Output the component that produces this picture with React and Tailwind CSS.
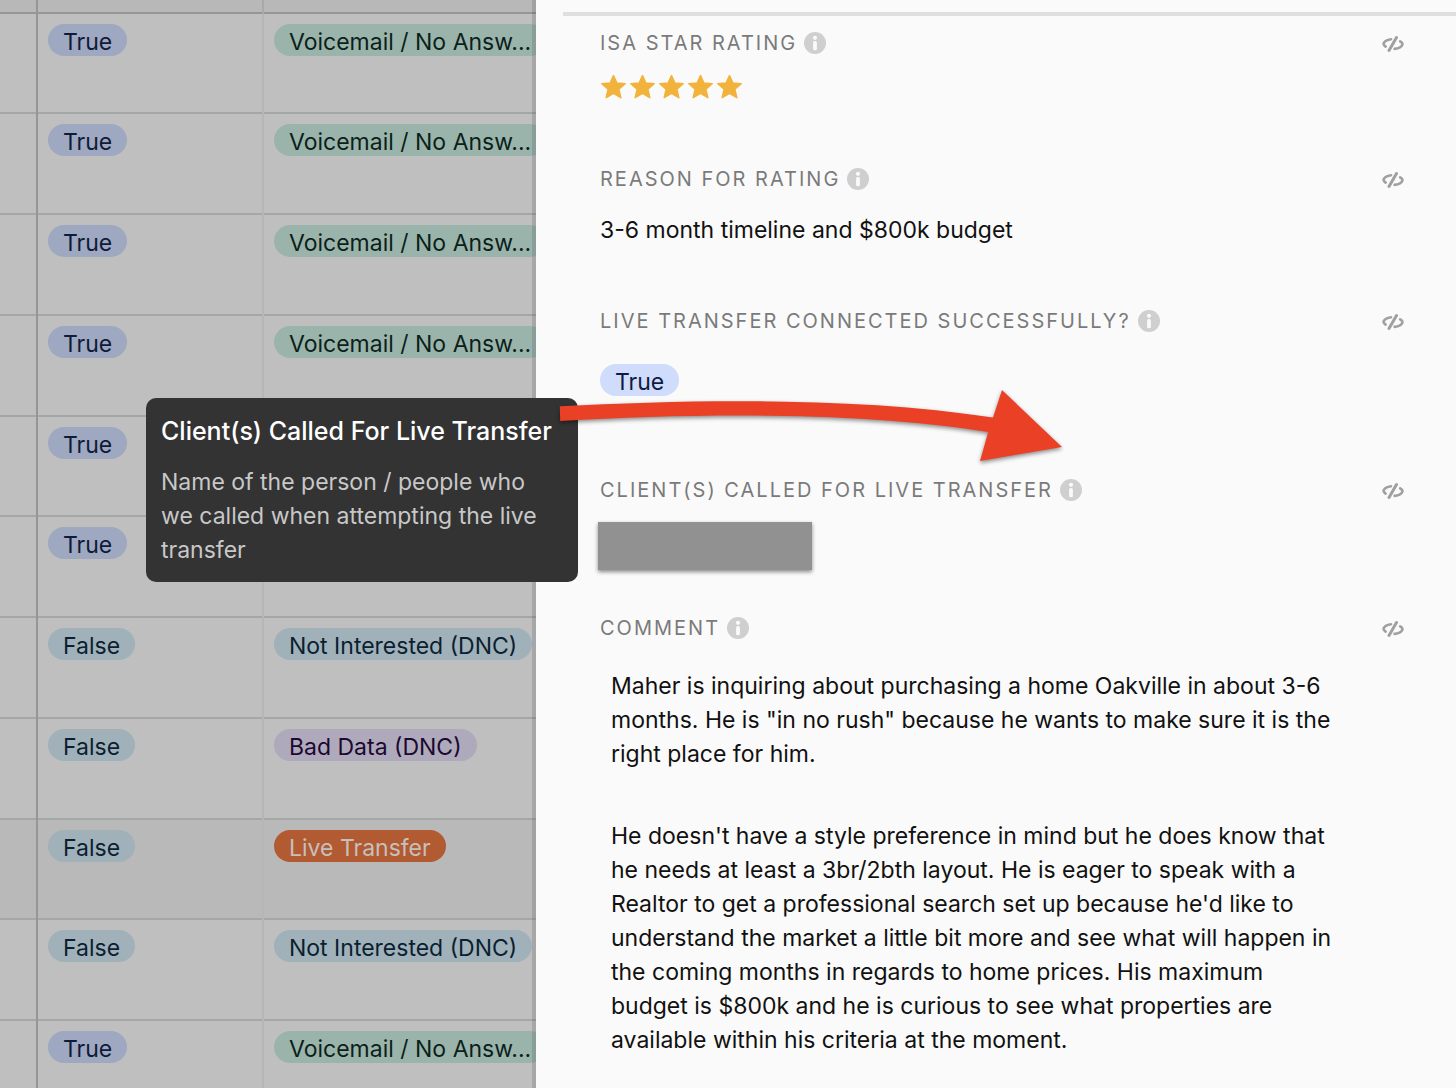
import { clsx } from "clsx";

const rows = [
  { connected: "True", result: "voicemail" },
  { connected: "True", result: "voicemail" },
  { connected: "True", result: "voicemail" },
  { connected: "True", result: "voicemail" },
  { connected: "True", result: "voicemail" },
  { connected: "True", result: "voicemail" },
  { connected: "False", result: "notInterested" },
  { connected: "False", result: "badData" },
  { connected: "False", result: "liveTransfer", active: true },
  { connected: "False", result: "notInterested" },
  { connected: "True", result: "voicemail" },
];

const results = {
  voicemail: { label: "Voicemail / No Answ...", className: "bg-[#9bb4ab] text-[#0b1f1b]" },
  notInterested: { label: "Not Interested (DNC)", className: "bg-[#a0b1ba] text-[#0b1f30]" },
  badData: { label: "Bad Data (DNC)", className: "bg-[#afaabb] text-[#1c0830]" },
  liveTransfer: { label: "Live Transfer", className: "bg-[#b25a31] text-[#c6c0bd]" },
};

const Pill = ({ className, children }) => (
  <span
    className={clsx(
      "inline-flex h-8 items-center rounded-full px-[15px] pt-1 text-[23px] leading-8 whitespace-nowrap",
      className
    )}
  >
    {children}
  </span>
);

const InfoIcon = () => (
  <svg viewBox="0 0 22 22" className="h-[22px] w-[22px] shrink-0" aria-hidden="true">
    <circle cx="11" cy="11" r="11" fill="#cfcfcf" />
    <circle cx="11" cy="5.8" r="2.1" fill="#fafafa" />
    <rect x="9.1" y="9" width="3.8" height="9.2" rx="1.5" fill="#fafafa" />
  </svg>
);

const CodeIcon = () => (
  <svg viewBox="0 0 22 16" className="mt-px h-4 w-[22px]" fill="none" stroke="#a0a0a0" strokeWidth="3" strokeLinecap="round">
    <path d="M14.5 1.6L7 14.4" />
    <path d="M9 3.2C5 3.8 2.4 5.2 1.6 7.4C1.3 8.5 2.2 9.6 3.6 10.6" strokeWidth="2.6" />
    <path d="M12.6 12.9C16.6 12.4 19.6 10.8 20.4 8.6C20.8 7.5 19.8 6.3 18.2 5.3" strokeWidth="2.6" />
  </svg>
);

const Star = () => (
  <svg viewBox="0 0 26 26" className="h-[26px] w-[26px]" aria-hidden="true">
    <path
      d="M13.5 1.6L16.9 9L25.2 9.7L18.9 15.1L20.8 23.7L13.5 19.4L6.2 23.7L8.1 15.1L1.8 9.7L10.1 9Z"
      fill="#f2b33d"
      stroke="#f2b33d"
      strokeWidth="1.5"
      strokeLinejoin="round"
    />
  </svg>
);

const Field = ({ label, className, children }) => (
  <section className={className}>
    <div className="flex h-[30px] items-center justify-between">
      <div className="flex items-center gap-[7px]">
        <h3 className="text-[20px] leading-[30px] tracking-[2px] text-[#7a7a7a] uppercase">{label}</h3>
        <button type="button" aria-label={`About ${label}`}>
          <InfoIcon />
        </button>
      </div>
      <button type="button" aria-label={`Hide ${label}`}>
        <CodeIcon />
      </button>
    </div>
    {children}
  </section>
);

const RecordsTable = () => (
  <table className="w-full table-fixed border-collapse">
    <colgroup>
      <col className="w-[37px]" />
      <col className="w-[226px]" />
      <col />
    </colgroup>
    <thead>
      <tr className="h-[13px] border-b-2 border-[#969696] bg-[#b8b8b8]">
        <th className="border-r-2 border-[#969696] p-0" />
        <th className="border-r-2 border-[#a6aaaa] p-0" />
        <th className="p-0" />
      </tr>
    </thead>
    <tbody>
      {rows.map((row, i) => (
        <tr
          key={i}
          className={clsx(
            "h-[101px] border-b-2 border-[#a3a8a6] nth-[4n+1]:h-[100px]",
            row.active && "bg-[#b9b9b9]"
          )}
        >
          <td className="border-r-2 border-r-[#969696] p-0" />
          <td className="border-r-2 border-r-[#b5b6b6] p-0 pt-[10px] pl-[10px] align-top">
            <Pill
              className={
                row.connected === "True" ? "bg-[#9ea8c0] text-[#0f1b38]" : "bg-[#a0b1ba] text-[#0b1f30]"
              }
            >
              {row.connected}
            </Pill>
          </td>
          <td className="overflow-hidden p-0 pt-[10px] pl-[10px] align-top">
            <Pill className={results[row.result].className}>{results[row.result].label}</Pill>
          </td>
        </tr>
      ))}
    </tbody>
  </table>
);

const RecordPanel = () => (
  <aside className="min-w-0 flex-1 bg-[#fafafa] pt-3 pl-[27px] shadow-[0_0_0_4px_rgba(0,0,0,0.12)]">
    <div className="h-1 bg-[#dfdfdf]" />
    <div className="flex flex-col pt-3 pr-[52px] pl-[37px]">
      <Field label="ISA Star Rating">
        <div className="mt-4 flex gap-[3px]" role="img" aria-label="5 out of 5 stars">
          {[1, 2, 3, 4, 5].map((n) => (
            <Star key={n} />
          ))}
        </div>
      </Field>

      <Field label="Reason For Rating" className="mt-16">
        <p className="mt-[19px] text-[23px] leading-[34px] text-[#111]">3-6 month timeline and $800k budget</p>
      </Field>

      <Field label="Live Transfer Connected Successfully?" className="mt-[59px]">
        <div className="mt-7 flex">
          <Pill className="bg-[#d0dcfb] text-[#0f1b40]">True</Pill>
        </div>
      </Field>

      <Field label="Client(s) Called For Live Transfer" className="mt-[79px]">
        <div className="mt-[17px] -ml-0.5 h-12 w-[214px] bg-[#919191] shadow-[0_2px_4px_rgba(0,0,0,0.45)]" />
      </Field>

      <Field label="Comment" className="mt-[43px]">
        <div className="mt-[26px] flex max-w-[742px] flex-col gap-12 pl-[11px] text-[23px] leading-[34px] text-[#111]">
          <p>
            Maher is inquiring about purchasing a home Oakville in about 3-6 months. He is "in no rush" because he
            wants to make sure it is the right place for him.
          </p>
          <p>
            He doesn't have a style preference in mind but he does know that he needs at least a 3br/2bth layout. He
            is eager to speak with a Realtor to get a professional search set up because he'd like to understand the
            market a little bit more and see what will happen in the coming months in regards to home prices. His
            maximum budget is $800k and he is curious to see what properties are available within his criteria at
            the moment.
          </p>
        </div>
      </Field>
    </div>
  </aside>
);

const FieldTooltip = () => (
  <div
    role="tooltip"
    className="absolute top-[398px] left-[146px] w-[432px] rounded-[10px] bg-[#333] px-[15px] pt-4 pb-[15px]"
  >
    <p className="text-[25px] leading-[34px] font-medium whitespace-nowrap text-white">
      Client(s) Called For Live Transfer
    </p>
    <p className="mt-[17px] text-[23px] leading-[34px] text-[#c8c8c8]">
      Name of the person / people who we called when attempting the live transfer
    </p>
  </div>
);

const Arrow = () => (
  <svg
    viewBox="556 386 512 84"
    className="pointer-events-none absolute top-[386px] left-[556px] h-[84px] w-[512px] drop-shadow-[0_2px_2px_rgba(0,0,0,0.45)]"
    aria-hidden="true"
  >
    <path
      d="M559.8 406.2C700 399 860 397 993 417.6L1002 390L1062 447L980 461L988.2 432C860 411.5 700 413 560.2 421Z"
      fill="#ea4025"
    />
  </svg>
);

export default function App() {
  return (
    <div className="relative flex h-screen overflow-hidden bg-[#bfbfbf] font-['Inter','Liberation_Sans',sans-serif]">
      <main className="w-[536px] shrink-0">
        <RecordsTable />
      </main>
      <RecordPanel />
      <FieldTooltip />
      <Arrow />
    </div>
  );
}
